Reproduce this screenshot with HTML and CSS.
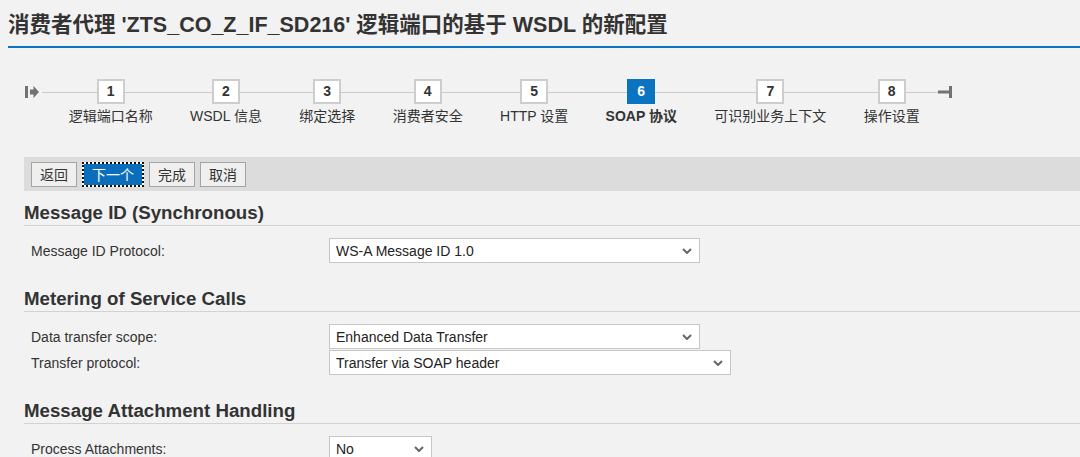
FILE: index.html
```html
<!DOCTYPE html>
<html lang="zh-CN">
<head>
<meta charset="utf-8">
<title>SOAP 协议</title>
<link rel="stylesheet" href="styles.css">
</head>
<body>
<h1 class="page-title">消费者代理 'ZTS_CO_Z_IF_SD216' 逻辑端口的基于 WSDL 的新配置</h1>

<div class="wizard">
  <span class="wizard-start">
    <svg width="14" height="12" viewBox="0 0 14 12"><rect x="0" y="0" width="3" height="12" fill="#727272"/><path d="M5 3.5 H8.5 V0 L14 6 L8.5 12 V8.5 H5 Z" fill="#727272"/></svg>
  </span>
  <ol class="steps">
    <li class="step"><span class="step-num">1</span><span class="step-label">逻辑端口名称</span></li>
    <li class="step"><span class="step-num">2</span><span class="step-label">WSDL 信息</span></li>
    <li class="step"><span class="step-num">3</span><span class="step-label">绑定选择</span></li>
    <li class="step"><span class="step-num">4</span><span class="step-label">消费者安全</span></li>
    <li class="step"><span class="step-num">5</span><span class="step-label">HTTP 设置</span></li>
    <li class="step step-active"><span class="step-num">6</span><span class="step-label">SOAP 协议</span></li>
    <li class="step"><span class="step-num">7</span><span class="step-label">可识别业务上下文</span></li>
    <li class="step"><span class="step-num">8</span><span class="step-label">操作设置</span></li>
  </ol>
  <span class="wizard-end">
    <svg width="14" height="12" viewBox="0 0 14 12"><rect x="0" y="4.5" width="12" height="3" fill="#727272"/><rect x="11" y="0" width="3" height="12" fill="#727272"/></svg>
  </span>
</div>

<div class="toolbar">
  <button class="btn">返回</button>
  <button class="btn btn-primary">下一个</button>
  <button class="btn">完成</button>
  <button class="btn">取消</button>
</div>

<section class="section">
  <h2 class="section-title">Message ID (Synchronous)</h2>
  <div class="form">
    <div class="form-row">
      <span class="form-label">Message ID Protocol:</span>
      <div class="select select-md"><span>WS-A Message ID 1.0</span><svg class="chev" width="10" height="6" viewBox="0 0 10 6"><polyline points="1,1 5,5 9,1" fill="none" stroke="#666" stroke-width="2"/></svg></div>
    </div>
  </div>
</section>

<section class="section">
  <h2 class="section-title">Metering of Service Calls</h2>
  <div class="form">
    <div class="form-row">
      <span class="form-label">Data transfer scope:</span>
      <div class="select select-md"><span>Enhanced Data Transfer</span><svg class="chev" width="10" height="6" viewBox="0 0 10 6"><polyline points="1,1 5,5 9,1" fill="none" stroke="#666" stroke-width="2"/></svg></div>
    </div>
    <div class="form-row">
      <span class="form-label">Transfer protocol:</span>
      <div class="select select-lg"><span>Transfer via SOAP header</span><svg class="chev" width="10" height="6" viewBox="0 0 10 6"><polyline points="1,1 5,5 9,1" fill="none" stroke="#666" stroke-width="2"/></svg></div>
    </div>
  </div>
</section>

<section class="section">
  <h2 class="section-title">Message Attachment Handling</h2>
  <div class="form">
    <div class="form-row">
      <span class="form-label">Process Attachments:</span>
      <div class="select select-sm"><span>No</span><svg class="chev" width="10" height="6" viewBox="0 0 10 6"><polyline points="1,1 5,5 9,1" fill="none" stroke="#666" stroke-width="2"/></svg></div>
    </div>
  </div>
</section>
</body>
</html>
```
FILE: styles.css
```css
html, body {
  margin: 0;
  padding: 0;
}
body {
  background: #f2f2f2;
  font-family: "Liberation Sans", Arial, "Noto Sans CJK SC", sans-serif;
  color: #333;
  overflow: hidden;
}

.page-title {
  margin: 0 0 0 8px;
  padding: 12px 0 8px;
  font-size: 21.5px;
  line-height: 26px;
  font-weight: bold;
  color: #333;
  border-bottom: 2px solid #0a74c1;
  white-space: nowrap;
}

/* wizard */
.wizard {
  display: flex;
  align-items: flex-start;
  margin-top: 31px;
  padding-left: 25px;
}
.wizard-start,
.wizard-end {
  height: 25px;
  display: flex;
  align-items: center;
}
.wizard-start {
  margin-right: 3px;
}
.steps {
  display: flex;
  list-style: none;
  margin: 0;
  padding: 0 0 0 8px;
  background: linear-gradient(#cbcbcb, #cbcbcb) 0 13px / 100% 1px no-repeat;
}
.step {
  display: flex;
  flex-direction: column;
  align-items: center;
  padding: 0 18.7px;
}
.step-num {
  box-sizing: border-box;
  width: 28px;
  height: 25px;
  border: 2px solid #cdcdcd;
  background: #fff;
  font-weight: bold;
  font-size: 14px;
  line-height: 21px;
  text-align: center;
  color: #333;
}
.step-label {
  margin-top: 3px;
  font-size: 14px;
  line-height: 18px;
  white-space: nowrap;
  color: #333;
}
.step-active .step-num {
  background: #0a74c1;
  border-color: #0a74c1;
  color: #fff;
}
.step-active .step-label {
  font-weight: bold;
  color: #333;
}

/* toolbar */
.toolbar {
  display: flex;
  gap: 5px;
  margin: 32px 0 0 24px;
  padding: 5px 7px 4px;
  background: #dcdcdc;
}
.btn {
  box-sizing: border-box;
  height: 25px;
  padding: 0 8px;
  border: 1px solid #a4a4a4;
  background: #efefef;
  font-family: "Noto Sans CJK SC", sans-serif;
  font-size: 14px;
  line-height: 21px;
  color: #333;
  cursor: pointer;
}
.btn-primary {
  border: 2px dotted #111;
  background: linear-gradient(#0a6ebd, #0a6ebd) padding-box, #fff;
  color: #fff;
}

/* sections */
.section {
  margin-left: 24px;
}
.section-title {
  margin: 25px 0 0;
  padding-bottom: 1px;
  font-size: 18.7px;
  line-height: 22px;
  font-weight: bold;
  color: #333;
  border-bottom: 1px solid #d3d3d3;
}
.toolbar + .section .section-title {
  margin-top: 11px;
}
.form {
  display: flex;
  flex-direction: column;
  gap: 1px;
  margin-top: 12px;
  padding-left: 7px;
}
.form-row {
  display: grid;
  grid-template-columns: 298px auto;
  align-items: center;
  justify-items: start;
}
.form-label {
  font-size: 14px;
  color: #333;
}
.select {
  box-sizing: border-box;
  height: 25px;
  display: flex;
  align-items: center;
  justify-content: space-between;
  padding: 0 7px 0 6px;
  border: 1px solid #c6c6c6;
  background: #fff;
  font-size: 14px;
  color: #222;
  white-space: nowrap;
}
.select-md { width: 371px; }
.select-lg { width: 402px; }
.select-sm { width: 103px; }
.chev {
  flex: none;
}
```
